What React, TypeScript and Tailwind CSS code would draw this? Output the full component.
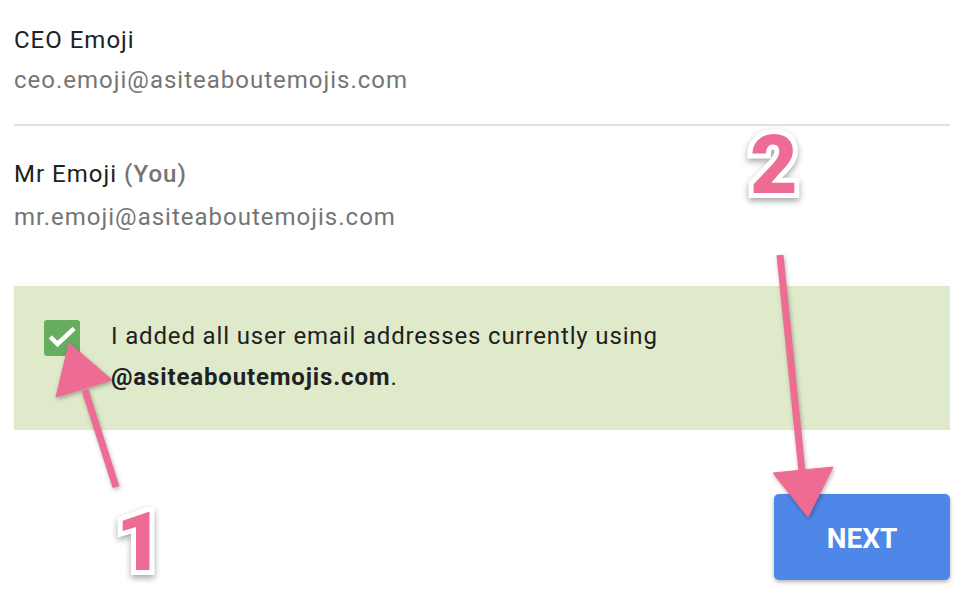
import React from 'react';

const users = [
  { name: 'CEO Emoji', email: 'ceo.emoji@asiteaboutemojis.com', you: false },
  { name: 'Mr Emoji', email: 'mr.emoji@asiteaboutemojis.com', you: true },
];

function Arrows() {
  return (
    <svg
      className="pointer-events-none absolute inset-0 [filter:drop-shadow(1px_2px_2px_rgba(0,0,0,0.3))]"
      width="962"
      height="594"
      viewBox="0 0 962 594"
    >
      <g fill="#ee6b94" stroke="#ee6b94">
        <line x1="116" y1="487" x2="85" y2="390" strokeWidth="7" />
        <polygon points="69,343 56,397 112,380" strokeWidth="1" />
        <line x1="780" y1="255" x2="802" y2="472" strokeWidth="7" />
        <polygon points="808,517 773,473 833,467" strokeWidth="1" />
      </g>
    </svg>
  );
}

function Step({ n, className }: { n: string; className: string }) {
  return (
    <span
      className={`pointer-events-none absolute font-['Roboto',sans-serif] text-[82px] font-black leading-none text-[#ee6b94] [-webkit-text-stroke:10px_white] [paint-order:stroke_fill] [filter:drop-shadow(0_3px_3px_rgba(0,0,0,0.35))] ${className}`}
    >
      {n}
    </span>
  );
}

export default function App() {
  return (
    <div className="relative h-[594px] w-[962px] overflow-hidden bg-white font-['Roboto','Liberation_Sans',sans-serif]">
      <div className="ml-[14px] w-[936px]">
        {users.map((u, i) => (
          <div
            key={u.email}
            className={i === 0 ? 'border-b-2 border-[#e0e0e0] pt-[20px] pb-[24px]' : 'pt-[28px]'}
          >
            <div className="text-[24px] leading-[40px] tracking-[1px] text-[#212121]">
              {u.name}
              {u.you && <span className="font-medium text-[#757575]"> (You)</span>}
            </div>
            <div className={`text-[24px] leading-[40px] tracking-[1px] text-[#757575] ${u.you ? 'pt-[3px]' : ''}`}>
              {u.email}
            </div>
          </div>
        ))}

        <div className="mt-[49px] flex items-start gap-[31px] bg-[#dfeacb] pt-[30px] pb-[32px] pl-[30px]">
          <div className="mt-[4px] flex h-[36px] w-[36px] shrink-0 items-center justify-center rounded-[3px] bg-[#66ad5f]">
            <svg width="36" height="36" viewBox="0 0 36 36" fill="none" stroke="white" strokeWidth="4.5" strokeLinecap="square">
              <path d="M8 18.5l5.5 5.5L28.5 10" />
            </svg>
          </div>
          <p className="text-[24px] leading-[41px] tracking-[0.85px] text-[#212121]">
            I added all user email addresses currently using
            <br />
            <b className="font-bold">@asiteaboutemojis.com</b>.
          </p>
        </div>

        <div className="mt-[64px] flex justify-end">
          <button className="h-[86px] w-[176px] rounded-[5px] bg-[#4f87e9] pt-[4px] text-[28px] font-bold text-white shadow-[0_2px_4px_rgba(0,0,0,0.3)]">
            NEXT
          </button>
        </div>
      </div>

      <Arrows />
      <Step n="2" className="left-[750px] top-[124px]" />
      <Step n="1" className="left-[116px] top-[501px]" />
    </div>
  );
}
